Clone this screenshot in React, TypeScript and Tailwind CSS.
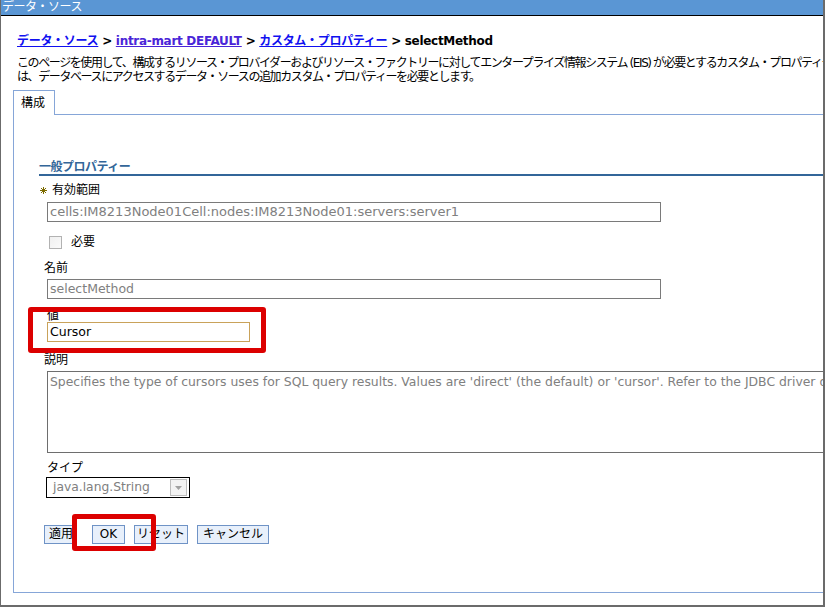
const font = "font-['DejaVu_Sans','Noto_Sans_CJK_JP',sans-serif]";

function Star() {
  return (
    <svg width="7" height="7" viewBox="0 0 7 7" className="inline-block mr-[5px] align-[0px]">
      <g stroke="#7d6b00" strokeWidth="1">
        <line x1="3.5" y1="0" x2="3.5" y2="7" />
        <line x1="0" y1="3.5" x2="7" y2="3.5" />
        <line x1="1" y1="1" x2="6" y2="6" />
        <line x1="6" y1="1" x2="1" y2="6" />
      </g>
    </svg>
  );
}

function Btn({ label, className = "" }: { label: string; className?: string }) {
  return (
    <button
      className={`h-[19px] border border-[#6f93c6] bg-[#e8f0fb] text-[12px] leading-[17px] text-black px-0 text-center whitespace-nowrap overflow-hidden ${className}`}
    >
      {label}
    </button>
  );
}

export default function App() {
  return (
    <div
      className={`relative w-[825px] h-[607px] overflow-hidden bg-white border-l border-r-2 border-b-2 border-[#6b6b6b] ${font}`}
    >
      {/* title bar */}
      <div className="h-[16px] bg-[#5a96d4] border-b border-black text-white text-[12px] leading-[15px] pl-[1px] tracking-[-0.5px]">
        データ・ソース
      </div>

      {/* breadcrumb */}
      <div className="pl-[16px] pt-[17px] text-[12px] font-bold leading-[16px] whitespace-nowrap tracking-[-0.3px]">
        <a className="text-[#1010f0] underline">データ・ソース</a>
        <span className="text-black"> &gt; </span>
        <a className="text-[#4a25d8] underline">intra-mart DEFAULT</a>
        <span className="text-black"> &gt; </span>
        <a className="text-[#1010f0] underline">カスタム・プロパティー</a>
        <span className="text-black"> &gt; selectMethod</span>
      </div>

      {/* description */}
      <div className="pl-[16px] mt-[7px] text-[12px] leading-[14px] whitespace-nowrap tracking-[-1.4px] text-black">
        このページを使用して、構成するリソース・プロバイダーおよびリソース・ファクトリーに対してエンタープライズ情報システム (EIS) が必要とするカスタム・プロパティー
        <br />
        は、データベースにアクセスするデータ・ソースの追加カスタム・プロパティーを必要とします。
      </div>

      {/* tab */}
      <div className="ml-[12px] mt-[6px] relative z-10 w-[42px] h-[25px] bg-white border border-b-0 border-[#86a6d8] text-[12px] leading-[24px] pl-[7px]">
        構成
      </div>

      {/* panel */}
      <div className="ml-[12px] -mt-[1px] w-[900px] h-[479px] border border-[#86a6d8] pl-[25px] pt-[45px]">
        <div className="w-[860px] border-b-2 border-[#336699] text-[12px] leading-[14px] text-[#336699] font-bold tracking-[-0.5px]">
          一般プロパティー
        </div>

        <div className="ml-[1px] mt-[7px] text-[12px] leading-[14px] text-black">
          <Star />
          有効範囲
        </div>
        <div className="ml-[8px] mt-[5px] w-[614px] h-[20px] border border-[#7a7a7a] text-[13px] leading-[18px] pl-[2px] text-[#808080] whitespace-nowrap">
          cells:IM8213Node01Cell:nodes:IM8213Node01:servers:server1
        </div>

        <div className="ml-[10px] mt-[13px] flex items-center h-[14px] text-[12px]">
          <div className="w-[13px] h-[13px] border border-[#b2b2b2] bg-gradient-to-br from-[#f0f0f0] to-[#fafafa]" />
          <span className="ml-[9px]">必要</span>
        </div>

        <div className="ml-[5px] mt-[12px] text-[12px] leading-[14px]">名前</div>
        <div className="ml-[8px] mt-[4px] w-[614px] h-[20px] border border-[#7a7a7a] text-[12.5px] leading-[18px] pl-[2px] text-[#808080]">
          selectMethod
        </div>

        <div className="ml-[8px] mt-[11px] text-[12px] leading-[12px]">値</div>
        <div className="ml-[8px] w-[203px] h-[20px] border border-[#c9a25a] text-[12.5px] leading-[18px] pl-[2px] text-black">
          Cursor
        </div>

        <div className="ml-[5px] mt-[11px] text-[12px] leading-[14px]">説明</div>
        <div className="ml-[8px] mt-[4px] w-[820px] h-[82px] border border-[#6e6e6e] text-[12.4px] leading-[15px] pl-[2px] pt-[2px] text-[#808080] whitespace-nowrap overflow-hidden">
          Specifies the type of cursors uses for SQL query results. Values are 'direct' (the default) or 'cursor'. Refer to the JDBC driver documentation.
        </div>

        <div className="ml-[8px] mt-[9px] text-[12px] leading-[12px]">タイプ</div>
        <div className="ml-[7px] mt-[3px] w-[144px] h-[21px] border border-black flex items-center justify-between pl-[6px] pr-[2px]">
          <span className="text-[12.3px] text-[#808080]">java.lang.String</span>
          <div className="w-[17px] h-[17px] border border-[#bcbcbc] bg-[#f2f2f2] flex items-center justify-center">
            <svg width="7" height="4" viewBox="0 0 7 4">
              <path d="M0 0 H7 L3.5 4 Z" fill="#a0a0a0" />
            </svg>
          </div>
        </div>

        <div className="ml-[5px] mt-[27px] flex items-center">
          <Btn label="適用" className="w-[33px] border-r-0" />
          <Btn label="OK" className="ml-[15px] w-[33px]" />
          <Btn label="リセット" className="ml-[9px] w-[54px]" />
          <Btn label="キャンセル" className="ml-[9px] w-[72px]" />
        </div>
      </div>

      {/* red annotation boxes */}
      <div className="absolute left-[27px] top-[307px] w-[238px] h-[46px] border-[5px] border-[#dc0000] rounded-[3px]" />
      <div className="absolute left-[71px] top-[514px] w-[84px] h-[37px] border-[5px] border-[#dc0000] rounded-[3px]" />
    </div>
  );
}
